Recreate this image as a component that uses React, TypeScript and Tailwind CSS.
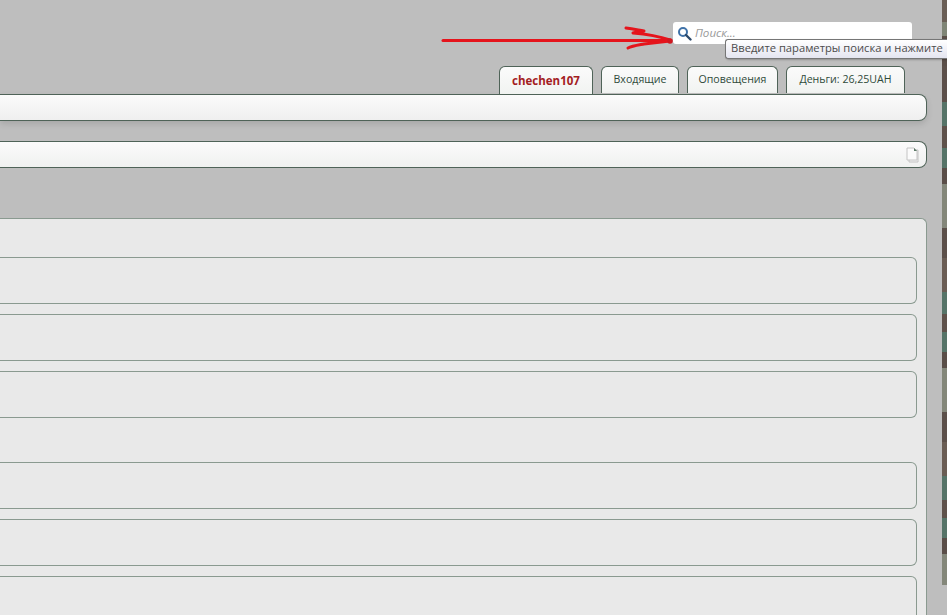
const tabClass =
  'flex h-[27px] items-center justify-center rounded-t-[6px] border border-b-0 border-[#4f6358] bg-gradient-to-b from-[#fbfbfb] to-[#f1f3f1] text-[10.6px] text-[#2f4a3a]'

// right edge: the page behind the wrapper shows through as a thin camouflage strip
const camo: [number, string][] = [
  [22, '#6a5f56'], [14, '#7f8576'], [30, '#5a4e48'], [36, '#5c504a'], [24, '#567468'], [22, '#5f524b'], [20, '#567468'], [16, '#5a4e48'],
  [44, '#84877a'], [30, '#5c504a'], [34, '#6a5d54'], [22, '#567468'], [18, '#5f524b'], [20, '#567468'], [16, '#5a4e48'],
  [44, '#84877a'], [30, '#5c504a'], [34, '#6a5d54'], [24, '#567468'], [18, '#5f524b'], [20, '#567468'], [16, '#5a4e48'], [31, '#84877a'],
]

function Row() {
  return <div className="h-[47px] shrink-0 rounded-r-[6px] border-y border-r border-[#8a9a90] bg-[#e9e9e9]" />
}

function Arrow() {
  return (
    <svg className="absolute left-[440px] top-[24px]" width="236" height="28" viewBox="0 0 236 28" fill="none">
      <g stroke="#e5141c" strokeWidth="3" strokeLinecap="round" strokeLinejoin="round">
        <path d="M3 16.5H120L230 16.5" />
        <path d="M186 4C193 5 198 6 204 7C200 8 196 8 193 9C205 10 218 12 230 16" />
        <path d="M188 24C192 22 199 21 204 20C212 19 222 18 230 17" />
      </g>
      <circle cx="230" cy="17" r="2.8" fill="#d01820" />
    </svg>
  )
}

export default function App() {
  return (
    <div className="relative flex h-[615px] w-[947px] overflow-hidden bg-[#bebebe] font-['Open_Sans',sans-serif]">
      <div className="flex min-w-0 flex-1 flex-col pr-[15px]">
        <div className="flex h-[66px] shrink-0 items-start justify-end pt-[22px] pr-[15px]">
          <div className="flex h-[22px] w-[239px] items-center gap-[3px] rounded-[3px] bg-white pl-[4px]">
            <svg width="15" height="15" viewBox="0 0 15 15" fill="none">
              <circle cx="6" cy="6" r="4" stroke="#3f72a8" strokeWidth="2" />
              <path d="M9 9l4.5 4.5" stroke="#2c4a6b" strokeWidth="2.4" strokeLinecap="round" />
            </svg>
            <span className="text-[11.6px] italic text-[#9a9a9a]">Поиск...</span>
          </div>
        </div>

        <div className="flex shrink-0 items-start justify-end gap-[8px] pr-[22px]">
          <div className={`${tabClass} z-10 mb-[-1px] !h-[28px] w-[94px] !text-[11.5px] font-bold !text-[#a3201f]`}>chechen107</div>
          <div className={`${tabClass} w-[78px]`}>Входящие</div>
          <div className={`${tabClass} w-[91px]`}>Оповещения</div>
          <div className={`${tabClass} w-[119px]`}>Деньги: 26,25UAH</div>
        </div>

        <div className="mt-[1px] h-[27px] shrink-0 rounded-r-[8px] border-y border-r border-[#4f6358] bg-gradient-to-b from-[#fbfbfb] to-[#efefef] shadow-[0_3px_6px_rgba(0,0,0,0.12)]" />

        <div className="mt-[20px] flex h-[27px] shrink-0 items-center justify-end rounded-r-[8px] border-y border-r border-[#4f6358] bg-gradient-to-b from-[#fbfbfb] to-[#f0f1f0] pr-[7px]">
          <svg width="13" height="16" viewBox="0 0 13 16" fill="none">
            <path d="M3 3h9v12H3z" fill="#f2f2f2" stroke="#c4c4c4" />
            <path d="M1 1h7l3 3v9H1z" fill="#fbfbfb" stroke="#c4c4c4" />
            <path d="M8 1v3h3z" fill="#5d7a68" />
          </svg>
        </div>

        <div className="mt-[50px] flex-1 rounded-tr-[6px] border-t border-r border-[#8a9a90] bg-[#e9e9e9] pr-[9px] pt-[38px]">
          <div className="flex flex-col gap-[10px]">
            <Row />
            <Row />
            <Row />
          </div>
          <div className="mt-[44px] flex flex-col gap-[10px]">
            <Row />
            <Row />
            <Row />
          </div>
        </div>
      </div>

      <div className="flex w-[5px] shrink-0 flex-col">
        {camo.map(([h, c], i) => (
          <div key={i} className="shrink-0" style={{ height: h, backgroundColor: c }} />
        ))}
      </div>

      <Arrow />

      <div className="absolute left-[725px] top-[39px] flex h-[20px] w-[222px] items-center whitespace-nowrap rounded-l-[3px] border border-r-0 border-[#767676] bg-gradient-to-b from-[#ffffff] to-[#e4e5f0] pb-[1px] pl-[5px] text-[11.2px] text-[#4c4c4c] shadow-[1px_1px_2px_rgba(0,0,0,0.25)]">
        Введите параметры поиска и нажмите
      </div>
    </div>
  )
}
